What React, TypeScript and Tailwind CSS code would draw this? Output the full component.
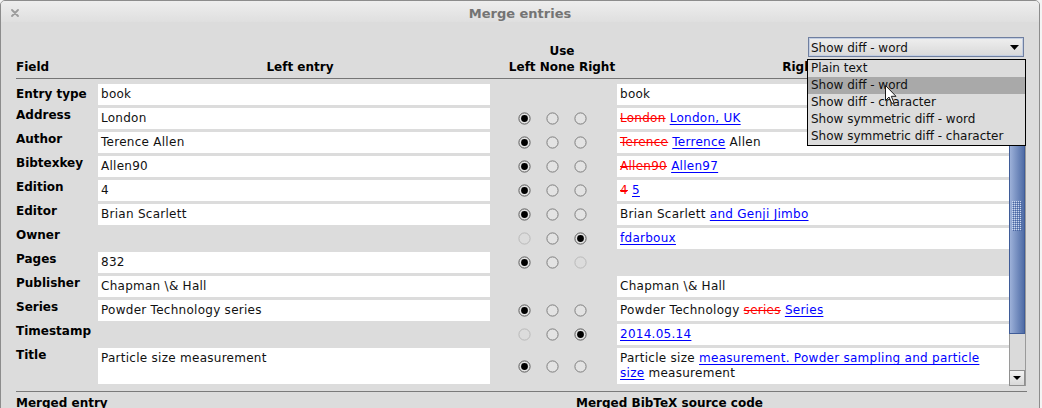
import React from 'react';

type S = 'on' | 'off' | 'dis';

function Radio({ s }: { s: S }) {
  const stroke = s === 'on' ? '#5c5c5c' : s === 'dis' ? '#b9b9b9' : '#7e7e7e';
  return (
    <svg width="13" height="13" viewBox="0 0 13 13" className="shrink-0">
      <circle cx="6.5" cy="6.5" r="5.6" fill={s === 'dis' ? '#dcdcdc' : '#e3e3e3'} stroke={stroke} strokeWidth="1" />
      {s === 'on' && <circle cx="6.5" cy="6.5" r="3.4" fill="#000" />}
    </svg>
  );
}

const Del = ({ children }: { children: React.ReactNode }) => (
  <span className="text-[#ff0000] line-through">{children}</span>
);
const Ins = ({ children }: { children: React.ReactNode }) => (
  <span className="text-[#0000ff] underline underline-offset-[2px]">{children}</span>
);

type Row = {
  label: string;
  left?: string;
  radios?: [S, S, S];
  right?: React.ReactNode;
  tall?: boolean;
  first?: boolean;
};

const rows: Row[] = [
  { label: 'Entry type', left: 'book', right: <>book</>, first: true },
  { label: 'Address', left: 'London', radios: ['on', 'off', 'off'], right: <><Del>London</Del> <Ins>London, UK</Ins></> },
  { label: 'Author', left: 'Terence Allen', radios: ['on', 'off', 'off'], right: <><Del>Terence</Del> <Ins>Terrence</Ins> Allen</> },
  { label: 'Bibtexkey', left: 'Allen90', radios: ['on', 'off', 'off'], right: <><Del>Allen90</Del> <Ins>Allen97</Ins></> },
  { label: 'Edition', left: '4', radios: ['on', 'off', 'off'], right: <><Del>4</Del> <Ins>5</Ins></> },
  { label: 'Editor', left: 'Brian Scarlett', radios: ['on', 'off', 'off'], right: <>Brian Scarlett <Ins>and Genji Jimbo</Ins></> },
  { label: 'Owner', radios: ['dis', 'off', 'on'], right: <Ins>fdarboux</Ins> },
  { label: 'Pages', left: '832', radios: ['on', 'off', 'dis'] },
  { label: 'Publisher', left: 'Chapman \\& Hall', right: <>{'Chapman \\& Hall'}</> },
  { label: 'Series', left: 'Powder Technology series', radios: ['on', 'off', 'off'], right: <>Powder Technology <Del>series</Del> <Ins>Series</Ins></> },
  { label: 'Timestamp', radios: ['dis', 'off', 'on'], right: <Ins>2014.05.14</Ins> },
  {
    label: 'Title',
    left: 'Particle size measurement',
    radios: ['on', 'off', 'off'],
    tall: true,
    right: (
      <>
        Particle size <Ins>measurement. Powder sampling and particle<br />size</Ins> measurement
      </>
    ),
  },
];

function EntryRow({ r }: { r: Row }) {
  return (
    <div className={`flex ${r.tall ? 'h-[36px]' : 'h-[21px]'} mb-[3px]`}>
      <div className={`w-[82px] shrink-0 font-bold leading-[15px] text-black ${r.first ? 'pt-[3px]' : ''}`}>{r.label}</div>
      <div className="w-[392px] shrink-0">
        {r.left !== undefined && (
          <div className="h-full bg-white pl-[3px] pt-[3px] leading-[15px] tracking-[0.27px] whitespace-nowrap">{r.left}</div>
        )}
      </div>
      <div className="w-[127px] shrink-0 flex items-center pl-[28px]">
        {r.radios && (
          <>
            <Radio s={r.radios[0]} />
            <span className="ml-[15px] flex"><Radio s={r.radios[1]} /></span>
            <span className="ml-[15px] flex"><Radio s={r.radios[2]} /></span>
          </>
        )}
      </div>
      <div className="w-[392px] shrink-0">
        {r.right !== undefined && (
          <div className="h-full bg-white pl-[3px] pt-[3px] leading-[15px] tracking-[0.27px] whitespace-nowrap">{r.right}</div>
        )}
      </div>
    </div>
  );
}

function ScrollBar() {
  return (
    <div className="w-[17px] h-[304px] shrink-0 flex flex-col border-r border-[#9a9a9a]">
      <div className="h-[16px] shrink-0 border border-[#8f8f8f] bg-linear-to-b from-[#f0f0f0] to-[#d6d6d6] flex items-center justify-center">
        <svg width="8" height="4" viewBox="0 0 8 4"><polygon points="0,4 8,4 4,0" fill="#000" /></svg>
      </div>
      <div className="h-[236px] shrink-0 border border-[#3f5c98] bg-linear-to-r from-[#9db1d9] to-[#4f6ca6] flex items-center justify-center">
        <svg width="10" height="30" viewBox="0 0 10 30">
          <defs>
            <pattern id="grip" width="2" height="2" patternUnits="userSpaceOnUse">
              <rect width="1" height="1" fill="#cdd8ee" />
              <rect x="1" y="1" width="1" height="1" fill="#4a66a2" />
            </pattern>
          </defs>
          <rect width="10" height="30" fill="url(#grip)" />
        </svg>
      </div>
      <div className="flex-1 border-l border-[#9a9a9a] bg-[#dadada]" />
      <div className="h-[16px] shrink-0 border border-[#8f8f8f] bg-linear-to-b from-[#f3f3f3] to-[#d8d8d8] flex items-center justify-center">
        <svg width="8" height="4" viewBox="0 0 8 4"><polygon points="0,0 8,0 4,4" fill="#000" /></svg>
      </div>
    </div>
  );
}

export default function App() {
  return (
    <div className="relative w-[1042px] h-[408px] overflow-hidden bg-[#f4f4f4] font-['DejaVu_Sans',sans-serif] text-[12px] text-[#111]">
      <div className="w-[1040px] h-[440px] border border-[#8c8c8c] rounded-t-[5px] bg-[#dcdcdc] flex flex-col">
        {/* Title bar */}
        <div className="relative h-[21px] shrink-0 rounded-t-[4px] bg-linear-to-b from-[#eeeeee] to-[#dfdfdf] flex justify-center">
          <svg className="absolute left-[10px] top-[8px]" width="8" height="8" viewBox="0 0 8 8">
            <path d="M1 1L7 7M7 1L1 7" stroke="#9c9c9c" strokeWidth="1.8" strokeLinecap="round" />
          </svg>
          <span className="pt-[5px] text-[13px] font-bold leading-[15px] text-[#747474]">Merge entries</span>
        </div>

        {/* Header */}
        <div className="ml-[15px] w-[1010px] h-[57px] shrink-0 border-b border-[#757575] flex items-end pb-[3px] font-bold text-black leading-[15px]">
          <div className="w-[82px] shrink-0">Field</div>
          <div className="w-[404px] shrink-0 text-center">Left entry</div>
          <div className="w-[120px] shrink-0 flex flex-col items-center">
            <div className="mb-[1px]">Use</div>
            <div>Left None Right</div>
          </div>
          <div className="flex-1 flex flex-col items-center">
            <div className="self-end mr-[2px] mb-[3px] w-[216px] h-[20px] border border-[#6f7fa0] shadow-[inset_0_0_0_1px_#c3cee2] bg-linear-to-b from-[#efefef] to-[#d9d9d9] flex items-center pl-[2px] pr-[4px] font-normal">
              <span className="flex-1 leading-[18px] pt-[1px] text-[#111]">Show diff - word</span>
              <svg width="9" height="5" viewBox="0 0 9 5"><polygon points="0,0 9,0 4.5,5" fill="#000" /></svg>
            </div>
            <div className="pr-[7px]">Right entry</div>
          </div>
        </div>

        {/* Body */}
        <div className="ml-[15px] mt-[3px] flex shrink-0">
          <div className="w-[993px] pt-[2px]">
            {rows.map((r) => (
              <EntryRow key={r.label} r={r} />
            ))}
          </div>
          <ScrollBar />
        </div>

        <div className="ml-[15px] mt-[4px] w-[1011px] h-px bg-[#7a7a7a] shrink-0" />
        <div className="ml-[15px] mt-[4px] flex font-bold leading-[15px] text-black shrink-0">
          <div className="w-[560px]">Merged entry</div>
          <div>Merged BibTeX source code</div>
        </div>
      </div>

      {/* Dropdown popup */}
      <div className="absolute left-[807px] top-[59px] w-[219px] h-[87px] border border-black bg-[#dcdcdc] flex flex-col">
        {['Plain text', 'Show diff - word', 'Show diff - character', 'Show symmetric diff - word', 'Show symmetric diff - character'].map((t, i) => (
          <div key={t} className={`h-[17px] leading-[17px] pl-[3px] whitespace-nowrap text-[#111] ${i === 1 ? 'bg-[#a9a9a9]' : ''}`}>{t}</div>
        ))}
      </div>

      {/* Mouse cursor */}
      <svg className="absolute left-[885px] top-[85px]" width="13" height="20" viewBox="0 0 13 20">
        <path d="M0.5 0.5 L0.5 15.5 L4 12 L6.8 18.5 L9 17.6 L6.3 11.3 L11 11.3 Z" fill="#ffffff" stroke="#1a1a1a" strokeWidth="1" strokeLinejoin="round" />
      </svg>
    </div>
  );
}
